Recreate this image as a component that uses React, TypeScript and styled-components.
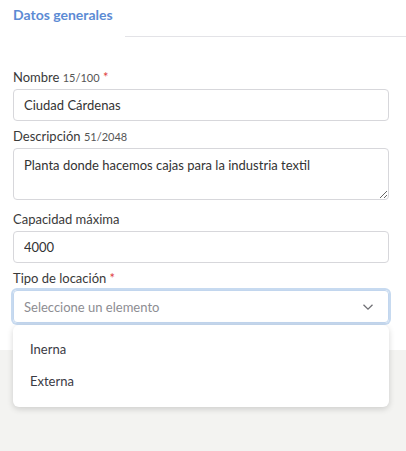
import styled, { createGlobalStyle } from "styled-components";

const GlobalStyle = createGlobalStyle`
  html, body {
    margin: 0;
    padding: 0;
    background: #f3f3f1;
  }
  body {
    font-family: Lato, "Liberation Sans", sans-serif;
    color: #333;
  }
  * {
    box-sizing: border-box;
  }
`;

const options = ["Inerna", "Externa"];

const App = () => {
  return (
    <Page>
      <GlobalStyle />
      <Panel>
        <TabBar>
          <Tab>Datos generales</Tab>
          <TabFiller />
        </TabBar>
        <Form>
          <Field>
            <Label>
              Nombre <Counter>15/100</Counter> <Required>*</Required>
            </Label>
            <Input defaultValue="Ciudad Cárdenas" />
          </Field>
          <Field>
            <Label>
              Descripción <Counter>51/2048</Counter>
            </Label>
            <TextArea defaultValue="Planta donde hacemos cajas para la industria textil" />
          </Field>
          <Field>
            <Label>Capacidad máxima</Label>
            <Input defaultValue="4000" />
          </Field>
          <Field>
            <Label>
              Tipo de locación <Required>*</Required>
            </Label>
            <SelectWrap>
              <SelectBox>
                <Placeholder>Seleccione un elemento</Placeholder>
                <svg width="12" height="8" viewBox="0 0 12 8" fill="none">
                  <path d="M1.5 1.8 6 6.2l4.5-4.4" stroke="#6f6f74" strokeWidth="1.3" />
                </svg>
              </SelectBox>
              <Menu>
                {options.map((o) => (
                  <MenuItem key={o}>{o}</MenuItem>
                ))}
              </Menu>
            </SelectWrap>
          </Field>
        </Form>
      </Panel>
    </Page>
  );
};

export default App;

const Page = styled.div`
  min-height: 100vh;
  background: #f3f3f1;
`;

const Panel = styled.div`
  position: relative;
  z-index: 1;
  background: #fff;
  height: 350px;
`;

const TabBar = styled.div`
  display: flex;
  height: 37px;
`;

const Tab = styled.div`
  width: 125px;
  padding: 6px 0 0 13px;
  font-size: 14px;
  font-weight: 700;
  color: #5c8bd4;
`;

const TabFiller = styled.div`
  flex: 1;
  border-bottom: 1px solid #e3e3e7;
`;

const Form = styled.div`
  padding: 30px 17px 0 13px;
  display: flex;
  flex-direction: column;
  gap: 5px;
`;

const Field = styled.div`
  display: flex;
  flex-direction: column;
`;

const Label = styled.label`
  font-size: 13px;
  line-height: 21px;
  margin-bottom: 1px;
  color: #3a3a3a;
`;

const Counter = styled.span`
  font-size: 11px;
  color: #555;
`;

const Required = styled.span`
  color: #e0413f;
`;

const Input = styled.input`
  height: 32px;
  border: 1px solid #d7d7db;
  border-radius: 4px;
  padding: 0 10px;
  font: inherit;
  font-size: 13px;
  color: #333;
  outline: none;
`;

const TextArea = styled.textarea`
  display: block;
  height: 52px;
  margin-bottom: 4px;
  border: 1px solid #d7d7db;
  border-radius: 4px;
  padding: 8px 10px 6px;
  font: inherit;
  font-size: 13px;
  color: #333;
  resize: vertical;
  outline: none;
`;

const SelectWrap = styled.div`
  position: relative;
`;

const SelectBox = styled.div`
  height: 33px;
  display: flex;
  align-items: center;
  justify-content: space-between;
  padding: 0 14px 0 10px;
  border: 1px solid #c2d6ee;
  border-radius: 4px;
  box-shadow: 0 0 0 2px #c7daf0;
`;

const Placeholder = styled.span`
  font-size: 13px;
  color: #8d8d92;
`;

const Menu = styled.div`
  position: absolute;
  z-index: 10;
  left: 0;
  right: 0;
  top: 35px;
  background: #fff;
  border-radius: 6px;
  padding: 8px 0 10px;
  box-shadow: 0 2px 6px rgba(0, 0, 0, 0.16);
`;

const MenuItem = styled.div`
  height: 32px;
  display: flex;
  align-items: center;
  padding-left: 17px;
  font-size: 13px;
  color: #3a3a44;
`;
